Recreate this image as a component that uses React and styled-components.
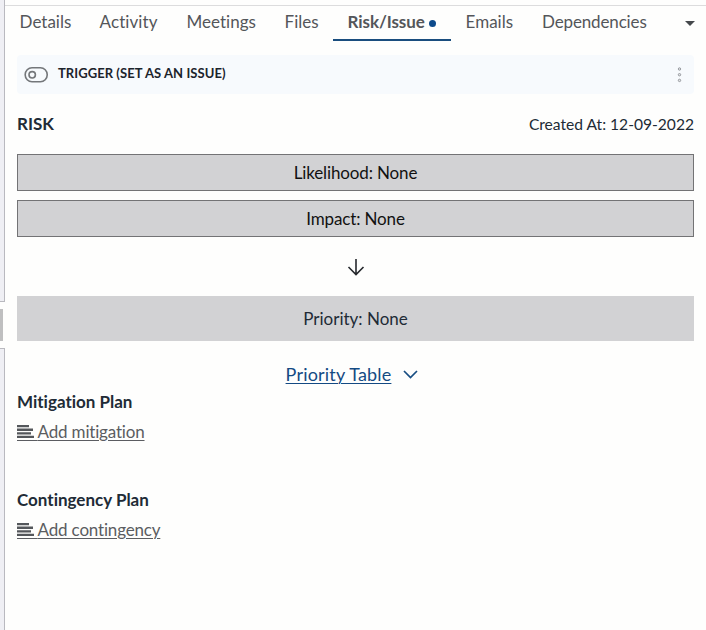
import React from "react";
import styled, { createGlobalStyle } from "styled-components";

const GlobalStyle = createGlobalStyle`
  * { box-sizing: border-box; }
  body {
    margin: 0;
    background: #fefefd;
    color: #212b36;
    font-family: Lato, "Liberation Sans", sans-serif;
    font-size: 17px;
    font-variant-ligatures: none;
    overflow: hidden;
  }
`;

const Page = styled.div`
  display: flex;
  width: 706px;
  height: 630px;
`;

const Rail = styled.div`
  width: 5px;
  display: flex;
  flex-direction: column;
`;

const RailBlock = styled.div`
  height: ${(p) => p.$height}px;
  background: #efeff4;
  border-right: 1px solid #b9b9bf;
  border-${(p) => p.$edge}: 1px solid #b9b9bf;
`;

const RailHandle = styled.div`
  width: 3px;
  height: 32px;
  margin: 7px 0 7px;
  background: #bfbfc0;
`;

const Panel = styled.main`
  flex: 1;
  padding-top: 5px;
`;

const Tabs = styled.nav`
  display: flex;
  height: 37px;
  border-top: 1px solid #dcdcdd;
`;

const Tab = styled.a`
  display: flex;
  align-items: center;
  width: ${(p) => p.$width}px;
  height: 35px;
  padding: 0 0 1px 14.6px;
  white-space: nowrap;
  line-height: 24px;
  color: #54565a;
  font-weight: ${(p) => (p.$active ? 700 : 400)};
  letter-spacing: ${(p) => p.$spacing || 0}px;
  border-bottom: 2px solid ${(p) => (p.$active ? "#194d7e" : "transparent")};
`;

const Dot = styled.span`
  width: 7px;
  height: 7px;
  margin: 3px 0 0 4px;
  border-radius: 50%;
  background: #0d4a8b;
`;

const TabMenu = styled.button`
  display: flex;
  margin: 15px 0 0 24px;
  padding: 0;
  border: 0;
  background: none;
  align-self: flex-start;
`;

const Content = styled.div`
  display: flex;
  flex-direction: column;
  padding: 13px 12px 0;
`;

const Trigger = styled.div`
  display: flex;
  align-items: center;
  height: 39px;
  padding: 0 12px 0 7px;
  border-radius: 4px;
  background: #f7fafd;
`;

const TriggerLabel = styled.span`
  flex: 1;
  margin-left: 10px;
  padding-bottom: 4px;
  font-size: 13px;
  letter-spacing: 0.06px;
  font-weight: 700;
  color: #1c242c;
`;

const RiskHeader = styled.header`
  display: flex;
  justify-content: space-between;
  align-items: center;
  height: 60px;
  font-size: 15.6px;
`;

const RiskTitle = styled.h2`
  margin: 0;
  padding-bottom: 2px;
  font-size: 17px;
  font-weight: 700;
`;

const Choice = styled.button`
  height: 37px;
  margin-bottom: 9px;
  padding: 0;
  border: 1px solid #737375;
  background: #d2d2d4;
  color: #111;
  font: inherit;
  font-variant-ligatures: none;
  letter-spacing: -0.13px;
`;

const ArrowRow = styled.div`
  display: flex;
  justify-content: center;
  align-items: center;
  height: 50px;
  padding: 0 0 8px 0;
`;

const Priority = styled.div`
  display: flex;
  justify-content: center;
  align-items: center;
  height: 45px;
  background: #d2d2d4;
`;

const TableToggle = styled.a`
  display: flex;
  justify-content: center;
  align-items: center;
  gap: 12px;
  height: 49px;
  margin-top: 9px;
  padding: 0 7px 2px 0;
  font-size: 18px;
  letter-spacing: 0.18px;
  color: #144a83;
`;

const Underlined = styled.span`
  text-decoration: underline;
  text-decoration-thickness: 1px;
  text-underline-offset: 2px;
`;

const Plan = styled.section`
  height: 98px;
  margin-top: ${(p) => (p.$first ? -9 : 0)}px;
`;

const PlanTitle = styled.h3`
  margin: 0;
  font-size: 17px;
  line-height: 24px;
  font-weight: 700;
`;

const AddLink = styled.a`
  display: inline-flex;
  align-items: center;
  height: 24px;
  margin-top: 5px;
  color: #5b5d61;
  letter-spacing: -0.18px;
`;

const LinkIcon = styled.svg`
  display: block;
  padding-top: 2px;
  height: 16px;
  border-bottom: 1px solid #5b5d61;
  box-sizing: content-box;
`;

const TABS = [
  { label: "Details", width: 80 },
  { label: "Activity", width: 87, spacing: 0.08 },
  { label: "Meetings", width: 98 },
  { label: "Files", width: 63 },
  { label: "Risk/Issue", width: 118, active: true, spacing: -0.1 },
  { label: "Emails", width: 76.5 },
  { label: "Dependencies", width: 133, spacing: -0.15 },
];

const PLANS = [
  { title: "Mitigation Plan", link: "Add mitigation" },
  { title: "Contingency Plan", link: "Add contingency" },
];

const ToggleIcon = () => (
  <svg width="24" height="16" viewBox="0 0 24 16" fill="none" stroke="#74777a" strokeWidth="1.6">
    <rect x="1.2" y="0.8" width="22" height="14" rx="6.8" />
    <circle cx="8.2" cy="7.8" r="3.2" />
  </svg>
);

const MoreIcon = () => (
  <svg width="5" height="16" viewBox="0 0 5 16" fill="#e3e5e8" stroke="#96999e">
    <circle cx="2.5" cy="2" r="1.2" />
    <circle cx="2.5" cy="7.7" r="1.2" />
    <circle cx="2.5" cy="13.4" r="1.2" />
  </svg>
);

const ArrowDownIcon = () => (
  <svg width="18" height="18" viewBox="0 0 18 18" fill="none" stroke="#26292d" strokeWidth="1.6">
    <path d="M9 1v15.5M1.5 9L9 16.5 16.5 9" />
  </svg>
);

const ChevronIcon = () => (
  <svg width="15" height="10" viewBox="0 0 15 10" fill="none" stroke="#174d82" strokeWidth="1.7">
    <path d="M1 2L7.5 8.5 14 2" />
  </svg>
);

const LinesIcon = () => (
  <LinkIcon width="17" height="16" viewBox="0 0 17 16" fill="#54575b">
    <path d="M0 1h12v2.3H0zM0 4.6h16v2.3H0zM0 8.2h14v2.3H0zM0 11.8h17v2.3H0z" />
  </LinkIcon>
);

export default function App() {
  return (
    <>
      <GlobalStyle />
      <Page>
        <Rail>
          <RailBlock $height={302} $edge="bottom" />
          <RailHandle />
          <RailBlock $height={282} $edge="top" />
        </Rail>
        <Panel>
          <Tabs>
            {TABS.map((t) => (
              <Tab key={t.label} $width={t.width} $active={t.active} $spacing={t.spacing}>
                {t.label}
                {t.active && <Dot />}
              </Tab>
            ))}
            <TabMenu aria-label="More tabs">
              <svg width="10" height="5" viewBox="0 0 10 5" fill="#45484c">
                <path d="M0 0h10L5 5z" />
              </svg>
            </TabMenu>
          </Tabs>
          <Content>
            <Trigger>
              <ToggleIcon />
              <TriggerLabel>TRIGGER (SET AS AN ISSUE)</TriggerLabel>
              <MoreIcon />
            </Trigger>
            <RiskHeader>
              <RiskTitle>RISK</RiskTitle>
              <span>Created At: 12-09-2022</span>
            </RiskHeader>
            <Choice>Likelihood: None</Choice>
            <Choice>Impact: None</Choice>
            <ArrowRow>
              <ArrowDownIcon />
            </ArrowRow>
            <Priority>Priority: None</Priority>
            <TableToggle>
              <Underlined>Priority Table</Underlined>
              <ChevronIcon />
            </TableToggle>
            {PLANS.map((p, i) => (
              <Plan key={p.title} $first={i === 0}>
                <PlanTitle>{p.title}</PlanTitle>
                <AddLink>
                  <LinesIcon />
                  <Underlined>&nbsp;{p.link}</Underlined>
                </AddLink>
              </Plan>
            ))}
          </Content>
        </Panel>
      </Page>
    </>
  );
}
